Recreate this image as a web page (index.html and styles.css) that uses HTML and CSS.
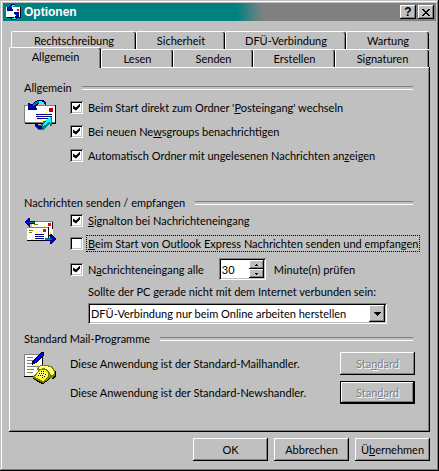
FILE: index.html
```html
<!DOCTYPE html>
<html lang="de">
<head>
  <meta charset="UTF-8">
  <meta name="viewport" content="width=device-width, initial-scale=1.0">
  <title>Optionen</title>
  <link rel="stylesheet" href="styles.css">
</head>
<body>
  <div class="window">
    <header class="titlebar">
      <svg class="title-icon" width="16" height="16" viewBox="0 0 16 16" shape-rendering="crispEdges">
        <path d="M1 3h14v10H1z" fill="#fff"></path>
        <path d="M15 3h1v11H2v-1h13z" fill="#000"></path>
        <path d="M12 5h2v2h-2z" fill="#f00"></path>
        <path d="M2 3h1l3-3h4v2H8L6 4l2 1v2H2z" fill="#000080"></path>
        <path d="M3 4h2v2H3zM5 3h1v1H5z" fill="#00f"></path>
        <path d="M6 2h1V1h3v1H8v1H6z" fill="#0ff"></path>
        <path d="M14 8v5h-1l-2 2-1 1H6v-2h3l2-3-2-1V8z" fill="#000080"></path>
        <path d="M11 9h2v2h-2zM10 12h1v1h-1z" fill="#00f"></path>
        <path d="M7 14h2v-1h1v1h1v1H7z" fill="#0ff"></path>
      </svg>
      <h1>Optionen</h1>
      <button type="button" class="title-button" aria-label="Hilfe">?</button>
      <button type="button" class="title-button" aria-label="Schließen">
        <svg width="8" height="7" viewBox="0 0 8 7" shape-rendering="crispEdges">
          <path d="M0 0h2v1h1v1h2V1h1V0h2v1H7v1H6v1H5v1h1v1h1v1h1v1H6V6H5V5H3v1H2v1H0V6h1V5h1V4h1V3H2V2H1V1H0z"></path>
        </svg>
      </button>
    </header>

    <main>
      <nav class="tabs">
        <div class="tab-row back-row">
          <button type="button" class="tab">Rechtschreibung</button>
          <button type="button" class="tab">Sicherheit</button>
          <button type="button" class="tab">DFÜ-Verbindung</button>
          <button type="button" class="tab">Wartung</button>
        </div>
        <div class="tab-row front-row">
          <button type="button" class="tab active">Allgemein</button>
          <button type="button" class="tab">Lesen</button>
          <button type="button" class="tab">Senden</button>
          <button type="button" class="tab">Erstellen</button>
          <button type="button" class="tab">Signaturen</button>
        </div>
      </nav>

      <form class="panel" id="options">
        <section class="general">
          <h2>Allgemein</h2>
          <div class="group">
            <svg class="icon" width="32" height="32" viewBox="0 0 32 32" shape-rendering="crispEdges">
              <path d="M0 6h31v17H0z" fill="#fff"></path>
              <path d="M0 6h31v1H1v16H0z" fill="#808080"></path>
              <path d="M31 6h1v19H1v-1h30z" fill="#000"></path>
              <path d="M0 23h31v1H0z" fill="#808080"></path>
              <path d="M23 7h1v1h-1zM29 7h1v1h-1zM21 9h1v1h-1zM23 11h1v1h-1zM19 12h1v1h-1zM22 13h1v1h-1zM26 14h1v1h-1zM29 14h1v1h-1zM17 14h1v1h-1zM13 16h1v1h-1zM28 16h1v1h-1zM14 18h1v1h-1zM11 18h1v1h-1zM13 20h1v1h-1zM16 20h2v1h-2zM11 21h1v1h-1zM18 21h1v1h-1z" fill="#ff0"></path>
              <path d="M25 9h4v4h-4z" fill="#c00000"></path>
              <path d="M12 15h16v1H12zM12 17h16v1H12zM13 19h12v1H13z" fill="#000080"></path>
              <path d="M4 4h2v1h2l3-3 3-1h5l3 3v2h-1l-2-2h-4l-3 3v2h1v2H4z" fill="#000080"></path>
              <path d="M5 6h3v1h2v2H5z" fill="#00f"></path>
              <path d="M9 5h1V4h1V3h2V2h3v2h-3v1h-1v1h-1v1H9z" fill="#008080"></path>
              <path d="M15 2h3v1h2v1h-5z" fill="#0ff"></path>
              <path d="M28 18v9h-2v-2l-4 3-2 3h-5l-4-3v-2h5l4-2-1-2h2z" fill="#008080"></path>
              <path d="M11 25h2l2 2h3v3h-3l-4-3z" fill="#000080"></path>
              <path d="M27 18v6h-1v-1h-2l-3 3-2 1v-2l3-3h-1v-1h2v-1h1v-1h2v-1z" fill="#0ff"></path>
            </svg>
            <div class="choices">
              <label class="check"><input type="checkbox" checked><span>Beim Start direkt zum Ordner '<u>P</u>osteingang' wechseln</span></label>
              <label class="check"><input type="checkbox" checked><span>Bei neuen Ne<u>w</u>sgroups benachrichtigen</span></label>
              <label class="check"><input type="checkbox" checked><span>Automatisch Ordner mit ungelesenen Nachrichten an<u>z</u>eigen</span></label>
            </div>
          </div>
        </section>

        <section class="transfer">
          <h2>Nachrichten senden / empfangen</h2>
          <div class="group">
            <svg class="icon" width="32" height="32" viewBox="0 0 32 32" shape-rendering="crispEdges">
              <path d="M8 3h21v15H8z" fill="#fff"></path>
              <path d="M8 3h21v1H8z" fill="#808080"></path>
              <path d="M28 4h1v13h-4v1h4z" fill="#000"></path>
              <path d="M24 5h3v3h-3z" fill="#f00"></path>
              <path d="M10 6h4v1h-4z" fill="#808000"></path>
              <path d="M21 5h1v1h-1zM22 7h1v1h-1zM20 8h1v1h-1zM26 9h1v1h-1zM25 11h1v1h-1zM27 12h1v1h-1zM26 14h1v1h-1zM25 16h1v1h-1z" fill="#ff0"></path>
              <path d="M3 9h21v13H3z" fill="#fff"></path>
              <path d="M3 9h21v1H3z" fill="#808080"></path>
              <path d="M24 9h1v14H3v-1h21z" fill="#000"></path>
              <path d="M19 11h3v3h-3z" fill="#f00"></path>
              <path d="M5 12h4v1H5zM5 14h3v1H5z" fill="#808000"></path>
              <path d="M17 11h1v1h-1zM15 13h2v1h-2zM17 14h1v1h-1zM12 14h1v1h-1zM20 15h2v1h-2zM22 17h1v1h-1zM9 17h1v1H9zM8 19h2v1H8zM21 19h1v1h-1zM7 21h3v1H7zM12 21h2v1h-2zM17 21h3v1h-3z" fill="#ff0"></path>
              <path d="M11 16h9v1h-9zM11 18h9v1h-9zM11 20h9v1h-9z" fill="#000080"></path>
              <path d="M0 4l5-4h1v3h5v3H6v3H5z" fill="#000080"></path>
              <path d="M5 4h6v1H5z" fill="#008080"></path>
              <path d="M2 4h3v1H2z" fill="#00f"></path>
              <path d="M32 21l-5 5h-1v-3h-5v-3h5v-4h1z" fill="#000080"></path>
              <path d="M21 20h7v2h-7z" fill="#008080"></path>
              <path d="M27 20h3v1h-3z" fill="#00f"></path>
            </svg>
            <div class="choices">
              <label class="check"><input type="checkbox" checked><span><u>S</u>ignalton bei Nachrichteneingang</span></label>
              <label class="check"><input type="checkbox"><span class="focused"><u>B</u>eim Start von Outlook Express Nachrichten senden und empfangen</span></label>
              <div class="interval">
                <label class="check"><input type="checkbox" checked><span>N<u>a</u>chrichteneingang alle</span></label>
                <div class="spinner">
                  <input type="number" id="minutes" value="30" min="1" aria-label="Minuten">
                  <div class="spin-buttons">
                    <button type="button" id="more" aria-label="Mehr"><svg width="3" height="2" viewBox="0 0 3 2" shape-rendering="crispEdges"><path d="M1 0h1v1h1v1H0V1h1z"></path></svg></button>
                    <button type="button" id="less" aria-label="Weniger"><svg width="3" height="2" viewBox="0 0 3 2" shape-rendering="crispEdges"><path d="M0 0h3v1H2v1H1V1H0z"></path></svg></button>
                  </div>
                </div>
                <label for="minutes">Minute(n) prüfen</label>
              </div>
              <div class="connection">
                <label for="dialup">Sollte der PC gerade nicht mit dem Internet verbunden sein:</label>
                <div class="dropdown">
                  <select id="dialup">
                    <option>DFÜ-Verbindung nur beim Online arbeiten herstellen</option>
                  </select>
                  <span class="arrow"><svg width="7" height="4" viewBox="0 0 7 4" shape-rendering="crispEdges"><path d="M0 0h7v1H6v1H5v1H4v1H3V3H2V2H1V1H0z"></path></svg></span>
                </div>
              </div>
            </div>
          </div>
        </section>

        <section class="programs">
          <h2>Standard Mail-Programme</h2>
          <div class="group">
            <svg class="icon" width="32" height="32" viewBox="0 0 32 32" shape-rendering="crispEdges">
              <path d="M0 2h18v22H0z" fill="#fff"></path>
              <path d="M0 2h18v1H1v21H0z" fill="#808080"></path>
              <path d="M18 3h1v12h-1zM0 24h10v1H0z" fill="#000"></path>
              <path d="M3 5h6v1H3zM3 8h7v1H3zM3 11h5v1H3zM3 14h12v1H3zM3 17h7v1H3zM3 20h6v1H3z" fill="#808080"></path>
              <path d="M9 13h1v1H9zM12 12h1v1h-1zM7 16h1v1H7zM9 15h1v1H9zM12 15h2v1h-2zM6 18h1v1H6zM9 18h1v1H9zM7 21h1v1H7zM5 22h1v1H5zM8 23h1v1H8z" fill="#ff0"></path>
              <path d="M17 0h3v3l-8 8-4 2v-3z" fill="#000"></path>
              <path d="M17 1h2v2l-8 8h-1V9z" fill="#00f"></path>
              <path d="M17 13h7l5 2 3 5v4l-3 3-3-1-2 3-5 3-10-6v-2l5-4-1-4z" fill="#808000"></path>
              <path d="M16 14h7l5 2 2 4v2l-2 1-2-1v-2l-4-3-3-1-2 1h-2z" fill="#ffff80"></path>
              <path d="M16 18h5l3 3v3l-5 5-8-4z" fill="#ff0"></path>
              <path d="M16 19h4l3 3-4 5-6-3z" fill="#ffff80"></path>
              <path d="M17 19h1v1h-1zM19 19h1v1h-1zM15 21h1v1h-1zM17 21h1v1h-1zM19 21h1v1h-1zM21 22h1v1h-1zM14 23h1v1h-1zM16 23h1v1h-1zM18 23h1v1h-1zM20 24h1v1h-1zM18 25h1v1h-1z" fill="#000"></path>
              <path d="M9 26l10 5 5-3 2-3v1l-2 3-5 3h-1l-9-5zM32 19v5l-3 3h-2l4-3v-5z" fill="#000"></path>
            </svg>
            <div class="handlers">
              <div class="handler">
                <p>Diese Anwendung ist der Standard-Mailhandler.</p>
                <button type="button" class="button" disabled>Sta<u>n</u>dard</button>
              </div>
              <div class="handler">
                <p>Diese Anwendung ist der Standard-Newshandler.</p>
                <button type="button" class="button default" disabled>Stan<u>d</u>ard</button>
              </div>
            </div>
          </div>
        </section>
      </form>
    </main>

    <footer>
      <button type="submit" form="options" class="button">OK</button>
      <button type="button" class="button">Abbrechen</button>
      <button type="button" class="button">Ü<u>b</u>ernehmen</button>
    </footer>
  </div>

  <script>
    const minutes = document.getElementById('minutes');

    document.getElementById('more').addEventListener('click', function() {
      minutes.stepUp();
    });

    document.getElementById('less').addEventListener('click', function() {
      minutes.stepDown();
    });

    document.getElementById('options').addEventListener('submit', function(e) {
      e.preventDefault();
    });
  </script>
</body>
</html>
```
FILE: styles.css
```css
* {
  margin: 0;
  padding: 0;
  box-sizing: border-box;
}

body,
button,
input,
select {
  font-family: Lato, "Liberation Sans", sans-serif;
  font-size: 11px;
  line-height: 13px;
  color: #000;
}

body {
  background-color: #c0c0c0;
}

button,
input,
select {
  appearance: none;
  border: none;
  border-radius: 0;
  outline: none;
  background-color: #c0c0c0;
}

u {
  text-underline-offset: 1px;
  text-decoration-skip-ink: none;
}

svg {
  display: block;
}

/* Window */
.window {
  display: flex;
  flex-direction: column;
  min-height: 100vh;
  padding: 3px;
  box-shadow: inset -1px -1px #000, inset 1px 1px #c0c0c0, inset -2px -2px #808080, inset 2px 2px #fff;
}

.titlebar {
  display: flex;
  align-items: center;
  height: 18px;
  padding: 0 2px;
  background: linear-gradient(to right, #008080 54%, #808080 60%);
}

h1 {
  flex: 1;
  margin-left: 3px;
  font-family: "Liberation Sans", Arial, sans-serif;
  font-size: 12px;
  line-height: 14px;
  font-weight: bold;
  color: #fff;
}

.title-button {
  display: flex;
  align-items: center;
  justify-content: center;
  width: 16px;
  height: 14px;
  font-family: "Liberation Sans", Arial, sans-serif;
  font-size: 12px;
  font-weight: bold;
  box-shadow: inset -1px -1px #000, inset 1px 1px #fff, inset -2px -2px #808080;
}

.title-button + .title-button {
  margin-left: 2px;
}

/* Tabs */
main {
  display: flex;
  flex-direction: column;
  flex: 1;
  padding: 10px 6px 0;
}

.tab-row {
  display: grid;
  height: 18px;
  padding: 0 1px 0 2px;
}

.back-row {
  grid-template-columns: 125fr 89fr 121fr 83fr;
}

.front-row {
  grid-template-columns: 90fr 72fr 80fr 82fr 94fr;
}

.tab {
  border-top: 1px solid #fff;
  border-left: 1px solid #fff;
  border-top-left-radius: 2px;
  border-top-right-radius: 2px;
  box-shadow: inset -1px 0 #000, inset -2px 0 #808080;
}

.tab.active {
  position: relative;
  z-index: 1;
  margin: -2px 0 -1px -2px;
  padding-bottom: 3px;
}

.panel {
  flex: 1;
  padding: 14px 15px 25px;
  box-shadow: inset -1px -1px #000, inset 1px 1px #fff, inset -2px -2px #808080;
}

/* Groups */
h2 {
  display: flex;
  align-items: center;
  gap: 10px;
  margin-right: 2px;
  font-size: 11px;
  font-weight: normal;
}

h2::after {
  content: "";
  flex: 1;
  height: 2px;
  border-top: 1px solid #808080;
  border-bottom: 1px solid #fff;
}

.group {
  display: flex;
  gap: 14px;
}

.icon {
  flex: none;
}

.choices {
  flex: 1;
  display: flex;
  flex-direction: column;
  min-width: 0;
}

.general {
  margin-bottom: 33px;
}

.general .group {
  margin-top: 5px;
}

.general .choices {
  gap: 8px;
}

.transfer {
  margin-bottom: 8px;
}

.transfer .group {
  margin-top: 3px;
}

.transfer .icon {
  margin-top: 6px;
}

.transfer .choices {
  gap: 7px;
}

.check {
  display: flex;
  align-items: center;
  height: 16px;
}

.check span {
  padding: 1px;
  margin-left: 4px;
  white-space: nowrap;
}

.check .focused {
  outline: 1px dotted #000;
}

input[type="checkbox"] {
  flex: none;
  width: 13px;
  height: 13px;
  background-color: #fff;
  box-shadow: inset 1px 1px #808080, inset -1px -1px #fff, inset 2px 2px #000, inset -2px -2px #c0c0c0;
}

input[type="checkbox"]:checked::before {
  content: "";
  display: block;
  width: 7px;
  height: 7px;
  margin: 3px;
  background-color: #000;
  clip-path: polygon(0 28%, 43% 58%, 100% 0, 100% 42%, 43% 100%, 0 71%);
}

.interval {
  display: flex;
  align-items: center;
  height: 22px;
}

.spinner {
  display: flex;
  width: 47px;
  height: 22px;
  margin: 0 8px 0 14px;
  padding: 2px;
  background-color: #fff;
  box-shadow: inset 1px 1px #808080, inset -1px -1px #fff, inset 2px 2px #000, inset -2px -2px #c0c0c0;
}

.spinner input {
  flex: 1;
  min-width: 0;
  padding-left: 1px;
  background-color: transparent;
  appearance: textfield;
}

.spinner input::-webkit-inner-spin-button {
  appearance: none;
}

.spin-buttons {
  display: flex;
  flex-direction: column;
  width: 15px;
}

.spin-buttons button {
  flex: 1;
  display: flex;
  align-items: center;
  justify-content: center;
  box-shadow: inset -1px -1px #000, inset 1px 1px #fff, inset -2px -2px #808080;
}

.connection {
  display: flex;
  flex-direction: column;
  gap: 5px;
  margin-top: -2px;
  margin-left: 18px;
  padding-right: 28px;
}

.dropdown {
  position: relative;
}

.dropdown select {
  display: block;
  width: 100%;
  height: 21px;
  padding: 0 20px 0 3px;
  background-color: #fff;
  box-shadow: inset 1px 1px #808080, inset -1px -1px #fff, inset 2px 2px #000, inset -2px -2px #c0c0c0;
}

.arrow {
  position: absolute;
  top: 2px;
  right: 2px;
  bottom: 2px;
  display: flex;
  align-items: center;
  justify-content: center;
  width: 16px;
  background-color: #c0c0c0;
  box-shadow: inset -1px -1px #000, inset 1px 1px #fff, inset -2px -2px #808080;
  pointer-events: none;
}

.programs .group {
  margin-top: 7px;
}

.handlers {
  flex: 1;
  display: flex;
  flex-direction: column;
  gap: 6px;
}

.handler {
  display: flex;
  align-items: center;
  justify-content: space-between;
}

/* Buttons */
.button {
  width: 75px;
  height: 23px;
  box-shadow: inset -1px -1px #000, inset 1px 1px #fff, inset -2px -2px #808080;
}

.button:disabled {
  color: #808080;
  text-shadow: 1px 1px #fff;
}

.button.default {
  box-shadow: inset 0 0 0 1px #000, inset -2px -2px #000, inset 2px 2px #fff, inset -3px -3px #808080;
}

footer {
  display: flex;
  justify-content: flex-end;
  gap: 6px;
  padding: 6px 6px 7px;
}
```
